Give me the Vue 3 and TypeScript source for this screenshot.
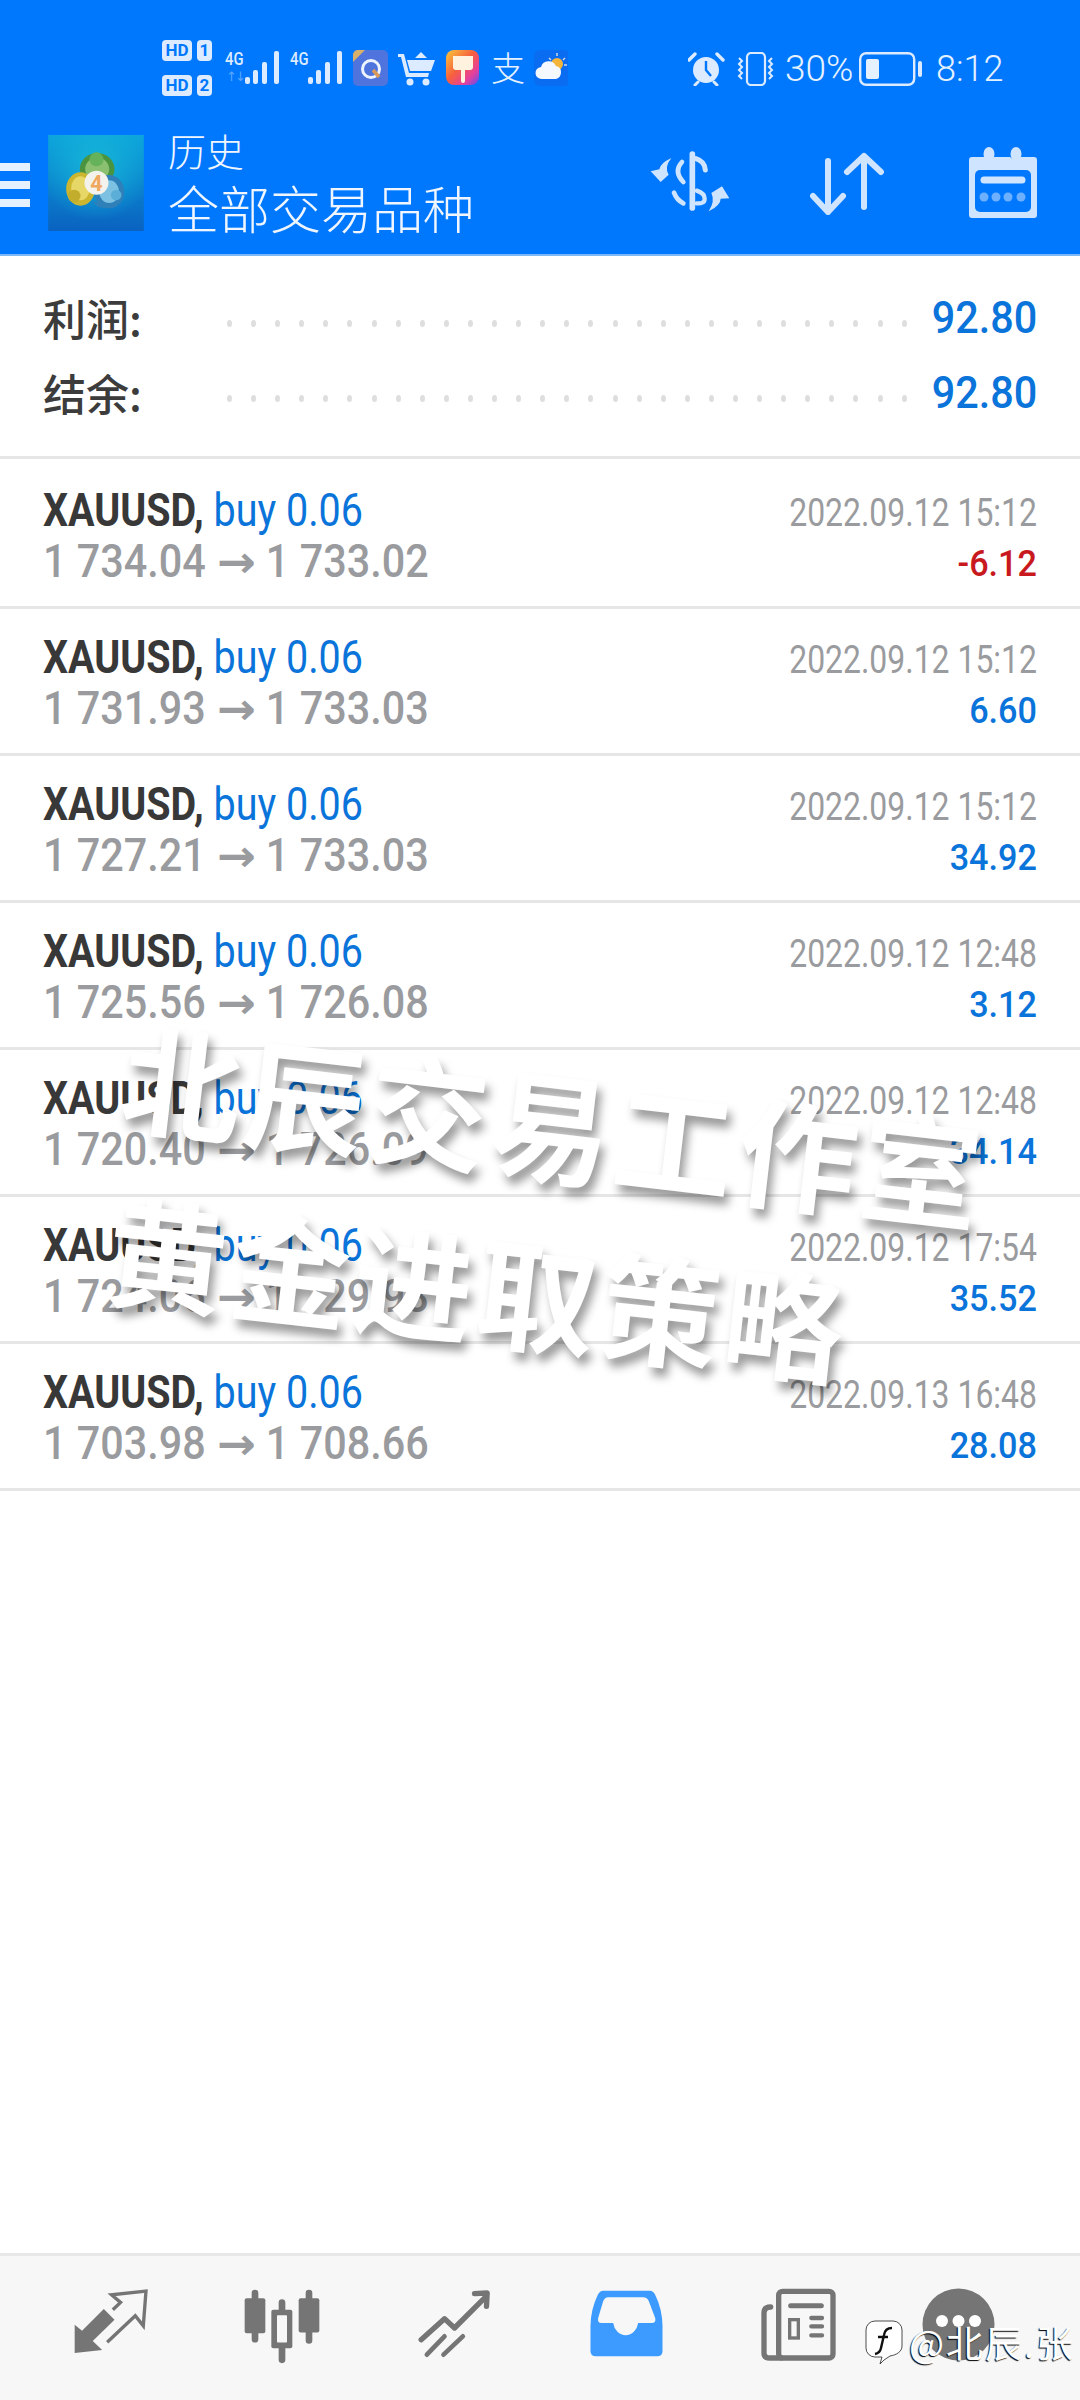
<script setup lang="ts">
type Trade = { open: string; close: string; time: string; profit: string; loss?: boolean };

const summary = [
  { label: "利润:", value: "92.80" },
  { label: "结余:", value: "92.80" },
];

const trades: Trade[] = [
  { open: "1 734.04", close: "1 733.02", time: "2022.09.12 15:12", profit: "-6.12", loss: true },
  { open: "1 731.93", close: "1 733.03", time: "2022.09.12 15:12", profit: "6.60" },
  { open: "1 727.21", close: "1 733.03", time: "2022.09.12 15:12", profit: "34.92" },
  { open: "1 725.56", close: "1 726.08", time: "2022.09.12 12:48", profit: "3.12" },
  { open: "1 720.40", close: "1 726.09", time: "2022.09.12 12:48", profit: "34.14" },
  { open: "1 724.06", close: "1 729.98", time: "2022.09.12 17:54", profit: "35.52" },
  { open: "1 703.98", close: "1 708.66", time: "2022.09.13 16:48", profit: "28.08" },
];

const dots = 29;
</script>

<template>
  <div class="page">
    <header class="top">
      <div class="status">
        <div class="hd">
          <div class="hd-line"><b>HD</b><b class="num">1</b></div>
          <div class="hd-line"><b>HD</b><b class="num">2</b></div>
        </div>
        <div class="signal s1">
          <span class="g">4G</span>
          <span class="updown">↑↓</span>
          <svg width="35" height="33" viewBox="0 0 35 33">
            <g fill="#dcebff">
              <rect x="0" y="26" width="5" height="7" rx="2" />
              <rect x="8" y="19" width="5" height="14" rx="2" />
              <rect x="17" y="11" width="5" height="22" rx="2" />
              <rect x="29" y="0" width="5" height="33" rx="2" />
            </g>
          </svg>
        </div>
        <div class="signal s2">
          <span class="g">4G</span>
          <svg width="35" height="33" viewBox="0 0 35 33">
            <g fill="#dcebff">
              <rect x="0" y="26" width="5" height="7" rx="2" />
              <rect x="8" y="19" width="5" height="14" rx="2" />
              <rect x="17" y="11" width="5" height="22" rx="2" />
              <rect x="29" y="0" width="5" height="33" rx="2" />
            </g>
          </svg>
        </div>
        <svg class="ic" width="35" height="36" viewBox="0 0 35 36">
          <rect width="35" height="36" rx="5" fill="#4f74dd" />
          <path d="M0 12V5a5 5 0 0 1 5-5h7z" fill="#d8b06a" />
          <circle cx="18" cy="19" r="8.500" fill="none" stroke="#eef4ff" stroke-width="3" />
          <path d="M20 20l6 7" stroke="#d89a5a" stroke-width="3.500" />
        </svg>
        <svg class="ic" width="37" height="36" viewBox="0 0 37 36">
          <g fill="#dcebff">
            <path d="M0 4h6l5 19h20l-1 4H8L3 7H0z" />
            <path d="M9 10h28l-4 11H12z" />
            <path d="M17 8l6-6 6 6z" />
            <circle cx="12" cy="32" r="3.500" />
            <circle cx="28" cy="32" r="3.500" />
          </g>
        </svg>
        <svg class="ic" width="36" height="36" viewBox="0 0 36 36">
          <defs>
            <linearGradient id="paint" x1="0" y1="0" x2="1" y2="1">
              <stop offset="0" stop-color="#f9c93a" />
              <stop offset=".45" stop-color="#f7603e" />
              <stop offset=".75" stop-color="#e5409c" />
              <stop offset="1" stop-color="#5a50f2" />
            </linearGradient>
          </defs>
          <rect x="1" width="33" height="35" rx="8" fill="url(#paint)" />
          <path d="M8 6h20v11q0 3-3 3h-5v11q0 2-2 2t-2-2V20h-5q-3 0-3-3z" fill="#fff3df" />
        </svg>
        <span class="ali">支</span>
        <svg class="ic" width="34" height="36" viewBox="0 0 34 36">
          <rect width="36" height="36" rx="6" fill="#0a6cf0" />
          <circle cx="23" cy="14" r="6" fill="#f4b63a" />
          <path d="M23 3v3M31 8l-2 2M15 8l2 2M33 15h-3" stroke="#cfd8e0" stroke-width="1.500" />
          <path d="M8 29a6 6 0 0 1-1-12 8 8 0 0 1 15-1 6 6 0 0 1 5 6 7 7 0 0 1-5 7z" fill="#f4f8ff" />
        </svg>

        <div class="status-right">
          <svg class="r-alarm" width="38" height="34" viewBox="0 0 38 34">
            <circle cx="18" cy="18" r="13" fill="#dcebff" />
            <path d="M18 9v9l5 6" stroke="#0078fe" stroke-width="2.400" fill="none" />
            <path d="M1 8l6-6M35 8l-6-6" stroke="#dcebff" stroke-width="3.400" stroke-linecap="round" />
            <path d="M7 33l3-3M29 33l-3-3" stroke="#dcebff" stroke-width="3" stroke-linecap="round" />
          </svg>
          <svg class="r-vib" width="39" height="34" viewBox="0 0 39 34">
            <rect x="11" y="1" width="18" height="32" rx="4" fill="none" stroke="#dcebff" stroke-width="2.200" />
            <path d="M3 6l3 3-3 3 3 3-3 3 3 3-3 3 3 3M36 6l-3 3 3 3-3 3 3 3-3 3 3 3-3 3" fill="none" stroke="#dcebff" stroke-width="2" />
          </svg>
          <span class="pct">30%</span>
          <svg class="r-bat" width="64" height="34" viewBox="0 0 64 34">
            <rect x="1.200" y="1.200" width="54" height="31.600" rx="6" fill="none" stroke="#dcebff" stroke-width="2.400" />
            <rect x="7" y="7" width="13" height="20" rx="2" fill="#e6f1ff" />
            <rect x="59" y="9" width="4" height="16" rx="2" fill="#dcebff" />
          </svg>
          <span class="clock">8:12</span>
        </div>
      </div>

      <div class="appbar">
        <div class="burger"><i></i><i></i><i></i></div>
        <svg class="logo" width="96" height="96" viewBox="25 30 287 288">
          <defs>
            <linearGradient id="tile" x1="0" y1="0" x2="0" y2="1">
              <stop offset="0" stop-color="#0ba4dc" />
              <stop offset="1" stop-color="#0a62c0" />
            </linearGradient>
            <radialGradient id="glow" cx=".5" cy=".3" r=".6">
              <stop offset="0" stop-color="#16b5d8" />
              <stop offset="1" stop-color="#16b5d8" stop-opacity="0" />
            </radialGradient>
          </defs>
          <rect x="25" y="30" width="287" height="288" fill="url(#tile)" />
          <rect x="25" y="30" width="287" height="288" fill="url(#glow)" />
          <ellipse cx="172" cy="132" rx="52" ry="48" fill="#4a9440" />
          <ellipse cx="172" cy="132" rx="36" ry="34" fill="#8ac070" />
          <ellipse cx="122" cy="192" rx="43" ry="50" fill="#cdb62f" />
          <ellipse cx="122" cy="190" rx="28" ry="36" fill="#e6d766" />
          <ellipse cx="208" cy="200" rx="45" ry="50" fill="#2f80b8" />
          <ellipse cx="208" cy="200" rx="30" ry="34" fill="#7cc0e2" />
          <path d="M158 228q30 14 52 6l-8 14q-30 4-44-20z" fill="#2f80b8" />
          <circle cx="170" cy="103" r="21" fill="#66b25a" />
          <circle cx="103" cy="213" r="19" fill="#c3ad2c" />
          <circle cx="229" cy="210" r="16" fill="#5aaed8" />
          <circle cx="170" cy="173" r="36" fill="#f4f2ec" />
          <text x="170" y="197" class="logo-four" text-anchor="middle">4</text>
        </svg>
        <div class="titles">
          <div class="t-small">历史</div>
          <div class="t-big">全部交易品种</div>
        </div>
        <div class="tools">
          <svg class="tool-dollar" width="110" height="85" viewBox="0 0 330 255">
            <g fill="none" stroke="#cfe4ff" stroke-linecap="round">
              <path d="M157 42v162" stroke-width="17" />
              <path d="M168 56q26 8 28 34" stroke-width="15" />
              <path d="M126 66q-26 28 4 60" stroke-width="14" />
              <path d="M170 152q24 8 24 24t-24 14" stroke-width="13" />
              <path d="M102 158q8 22 28 32" stroke-width="14" />
            </g>
            <path d="M94 54q-34 16-36 34l-26 6 30 32 24-22q-14-22 8-50zM206 214q36-18 36-38l26-1-22-36-32 20q12 24-8 55z" fill="#cfe4ff" />
          </svg>
          <svg class="tool-sort" width="74" height="63" viewBox="0 0 74 63">
            <g fill="none" stroke="#cfe4ff" stroke-width="6" stroke-linecap="round" stroke-linejoin="round">
              <path d="M18 9v51M3 44l15 16 15-16" />
              <path d="M54 4v51M37 20L54 4l17 16" />
            </g>
          </svg>
          <svg class="tool-cal" width="68" height="71" viewBox="0 0 68 71">
            <path d="M3 10h12a7 7 0 0 0 10 0h16a7 7 0 0 0 11 0h13a3 3 0 0 1 3 3v55a3 3 0 0 1-3 3H3a3 3 0 0 1-3-3V13a3 3 0 0 1 3-3z" fill="#cfe4ff" />
            <rect x="6" y="23" width="56" height="42" rx="5" fill="#0078fe" />
            <ellipse cx="20" cy="7" rx="5.500" ry="7" fill="#cfe4ff" />
            <ellipse cx="47" cy="7" rx="5.500" ry="7" fill="#cfe4ff" />
            <path d="M15 33h38" stroke="#cfe4ff" stroke-width="7" stroke-linecap="round" />
            <g fill="#6cb0ff">
              <circle cx="15" cy="50" r="4.500" />
              <circle cx="27" cy="50" r="4.500" />
              <circle cx="39" cy="50" r="4.500" />
              <circle cx="52" cy="50" r="4.500" />
            </g>
          </svg>
        </div>
      </div>
    </header>

    <section class="summary">
      <div v-for="item in summary" :key="item.label" class="sum-row">
        <span class="sum-label">{{ item.label }}</span>
        <span class="sum-dots"><i v-for="n in dots" :key="n"></i></span>
        <span class="sum-value">{{ item.value }}</span>
      </div>
    </section>

    <main class="list">
      <div v-for="(t, i) in trades" :key="i" class="trade">
        <div class="left">
          <div class="line"><b class="sym">XAUUSD,</b> <span class="buy">buy 0.06</span></div>
          <div class="line price">{{ t.open }} <span class="arrow">→</span> {{ t.close }}</div>
        </div>
        <div class="right">
          <div class="time">{{ t.time }}</div>
          <div class="profit" :class="{ loss: t.loss }">{{ t.profit }}</div>
        </div>
      </div>
    </main>

    <nav class="nav">
      <div class="nav-item">
        <svg width="77" height="67" viewBox="95 70 230 200">
          <path d="M103 180l22 18 65-65 32 32-65 63 28 27-82 9z" fill="#757575" />
          <path d="M217 135l23-22-27-23 103-11-8 104-24-30-84 79" fill="none" stroke="#757575" stroke-width="10" />
        </svg>
      </div>
      <div class="nav-item">
        <svg width="80" height="77" viewBox="605 55 240 230">
          <g stroke="#757575" stroke-width="20" stroke-linecap="round" fill="none">
            <path d="M644 70v138M725 98v172M806 70v142" />
          </g>
          <rect x="613" y="85" width="62" height="105" rx="6" fill="#757575" />
          <rect x="775" y="85" width="62" height="103" rx="6" fill="#757575" />
          <rect x="693" y="120" width="63" height="115" rx="6" fill="#757575" />
          <rect x="710" y="136" width="30" height="82" rx="2" fill="#f7f7f7" />
        </svg>
      </div>
      <div class="nav-item">
        <svg width="77" height="70" viewBox="1125 60 230 210">
          <g fill="none" stroke="#757575" stroke-linecap="round">
            <path d="M1140 215l70-63 30 28 95-95M1300 77l38-2-2 40" stroke-width="16" stroke-linejoin="round" />
            <path d="M1157 260l53-55M1207 260l58-55" stroke-width="14" />
          </g>
        </svg>
      </div>
      <div class="nav-item">
        <svg width="77" height="70" viewBox="55 60 230 210">
          <path d="M100 68h140q10 0 16 12 22 45 22 95v75q0 15-16 15H78q-16 0-16-15v-75q0-50 22-95 6-12 16-12z" fill="#3d9bff" />
          <path d="M115 88h105q12 0 17 12l19 50q4 15-11 15h-40a38 44 0 0 1-75 0H95q-13 0-10-15l15-50q5-12 15-12z" fill="#f7f7f7" />
        </svg>
      </div>
      <div class="nav-item">
        <svg width="80" height="75" viewBox="570 55 240 225">
          <g fill="none" stroke="#757575" stroke-linecap="round">
            <rect x="632" y="65" width="163" height="200" rx="12" stroke-width="16" />
            <path d="M608 112q-20 0-20 18v120q0 15 17 15h35" stroke-width="16" />
            <path d="M668 108h92" stroke-width="15" />
            <path d="M730 145h32M730 170h32M730 197h32" stroke-width="13" />
          </g>
          <rect x="665" y="150" width="26" height="55" fill="none" stroke="#757575" stroke-width="10" />
        </svg>
      </div>
      <div class="nav-item">
        <svg width="73" height="73" viewBox="0 0 73 73">
          <circle cx="36.500" cy="36.500" r="36" fill="#757575" />
          <circle cx="20" cy="33" r="6" fill="#fff" />
          <circle cx="36.500" cy="33" r="6" fill="#fff" />
          <circle cx="53" cy="33" r="6" fill="#fff" />
        </svg>
      </div>
    </nav>

    <div class="mark-line mark-a">北辰交易工作室</div>
    <div class="mark-line mark-b">黄金进取策略</div>

    <div class="credit">
      <svg width="38" height="46" viewBox="0 0 38 46">
        <path d="M10 2h18a9 9 0 0 1 9 9v16c0 6-6 9-12 10l-6 4-4 4 2-7h-7a9 9 0 0 1-9-9V11a9 9 0 0 1 9-9z" fill="#fff" stroke="#222" stroke-width=".8" />
        <path d="M27 9q-7 0-8 7l-3 13q-1 5-6 6M13 18h10" fill="none" stroke="#111" stroke-width="2.400" />
      </svg>
      <span>@北辰.张</span>
    </div>
  </div>
</template>

<style scoped>
.page {
  position: relative;
  width: 1080px;
  height: 2400px;
  overflow: hidden;
  display: flex;
  flex-direction: column;
  background: #fff;
  font-family: Roboto, "Noto Sans CJK SC", sans-serif;
}
.top {
  background: #0078fe;
  border-bottom: 2px solid #7db8f5;
  color: #f0f6ff;
}
.status {
  height: 122px;
  box-sizing: border-box;
  padding: 40px 76px 0 162px;
  display: flex;
  align-items: flex-start;
  gap: 10px;
}
.hd {
  width: 53px;
  flex: none;
  display: flex;
  flex-direction: column;
  gap: 14px;
}
.hd-line {
  display: flex;
  gap: 5px;
}
.hd-line b {
  height: 21px;
  width: 30px;
  border-radius: 4px;
  background: #dcebff;
  color: #0078fe;
  font: 700 17px/21px Roboto, sans-serif;
  text-align: center;
}
.hd-line b.num {
  width: 15px;
}
.signal {
  position: relative;
  flex: none;
  display: flex;
  justify-content: flex-end;
  height: 45px;
  padding-top: 11px;
}
.s1 {
  width: 55px;
}
.s2 {
  width: 53px;
}
.g {
  position: absolute;
  left: 0;
  top: 11px;
  font: 500 19px/16px Roboto, sans-serif;
  color: #dcebff;
  transform: scaleX(0.78);
  transform-origin: left;
}
.updown {
  position: absolute;
  left: 1px;
  top: 30px;
  font: 400 13px/14px "DejaVu Sans", sans-serif;
  letter-spacing: -2px;
  color: #5aa6ff;
}
.ic {
  flex: none;
  margin-top: 10px;
}
.ali {
  width: 33px;
  flex: none;
  margin-top: 8px;
  font: 300 34px/38px "Noto Sans CJK SC", sans-serif;
  color: #e6f1ff;
}
.status-right {
  margin-left: auto;
  margin-top: 12px;
  display: flex;
  align-items: center;
  color: #e6f1ff;
}
.r-alarm {
  margin-right: 10px;
}
.r-vib {
  margin-right: 10px;
}
.pct {
  width: 74px;
  font-size: 37px;
  font-weight: 300;
  line-height: 34px;
  white-space: nowrap;
}
.r-bat {
  margin-right: 13px;
}
.clock {
  width: 68px;
  font-size: 36px;
  font-weight: 300;
  line-height: 34px;
}
.appbar {
  height: 132px;
  box-sizing: border-box;
  padding-top: 13px;
  display: flex;
  align-items: flex-start;
}
.burger {
  width: 30px;
  margin-top: 28px;
  display: flex;
  flex-direction: column;
  gap: 10px;
}
.burger i {
  display: block;
  height: 8px;
  background: #e6f1ff;
}
.logo {
  margin-left: 18px;
  flex: none;
}
.logo-four {
  font: 700 64px Roboto, sans-serif;
  fill: #f0a860;
}
.titles {
  margin-left: 24px;
  margin-top: -10px;
}
.t-small {
  font: 300 38px/50px "Noto Sans CJK SC", sans-serif;
}
.t-big {
  font: 300 51px/64px "Noto Sans CJK SC", sans-serif;
  white-space: nowrap;
}
.tools {
  position: relative;
  display: flex;
  align-items: flex-start;
  margin-left: 166px;
  margin-top: 5px;
}
.tool-sort {
  margin-left: 60px;
  margin-top: 12px;
}
.tool-cal {
  margin-left: 85px;
  margin-top: 7px;
}
.summary {
  box-sizing: border-box;
  height: 203px;
  padding: 23px 43px 0;
  border-bottom: 3px solid #e6e6e6;
}
.sum-row {
  height: 75px;
  display: flex;
  align-items: center;
}
.sum-label {
  width: 184px;
  font: 500 43px/50px "Noto Sans CJK SC", sans-serif;
  color: #3c3c3c;
}
.sum-dots {
  width: 680px;
  display: flex;
  justify-content: space-between;
  margin-top: 14px;
}
.sum-dots i {
  width: 5px;
  height: 7px;
  border-radius: 50%;
  background: #dedede;
}
.sum-value {
  margin-left: auto;
  margin-top: 2px;
  font-size: 44px;
  font-weight: 500;
  color: #0a74da;
  transform: scaleX(0.94);
  transform-origin: right;
}
.list {
  flex: 1;
  padding-top: 3px;
}
.trade {
  box-sizing: border-box;
  height: 147px;
  padding: 22px 43px 0;
  border-bottom: 3px solid #e6e6e6;
  display: flex;
  justify-content: space-between;
}
.left {
  width: 600px;
  flex: none;
}
.line {
  font-size: 47px;
  line-height: 51px;
  white-space: nowrap;
  transform: scaleX(0.84);
  transform-origin: left;
  width: 800px;
}
.sym {
  font-weight: 700;
  color: #383838;
}
.buy {
  color: #0a74da;
}
.price {
  font-weight: 500;
  color: #9a9b9e;
  transform: scaleX(0.88);
}
.arrow {
  display: inline-block;
  margin: 0 4px;
  font-family: "DejaVu Sans", sans-serif;
  font-weight: 700;
  font-size: 44px;
  line-height: 40px;
  transform: scaleX(1.2);
}
.right {
  text-align: right;
  padding-top: 4px;
}
.time {
  font-size: 38px;
  line-height: 51px;
  color: #9a9b9e;
  white-space: nowrap;
  transform: scaleX(0.84);
  transform-origin: right;
}
.profit {
  font-size: 36px;
  font-weight: 500;
  line-height: 51px;
  color: #0a74da;
  transform: scaleX(0.95);
  transform-origin: right;
}
.loss {
  color: #c8191e;
}
.nav {
  box-sizing: border-box;
  height: 147px;
  border-top: 3px solid #e8e8e8;
  background: #f7f7f7;
  padding-left: 24px;
  display: flex;
  align-items: flex-start;
}
.nav-item {
  width: 172px;
  flex: none;
  padding-top: 32px;
  display: flex;
  justify-content: center;
}
.nav-item:last-child {
  margin-left: -12px;
}
.mark-line {
  position: absolute;
  font: 700 120px/130px "Noto Sans CJK SC", sans-serif;
  letter-spacing: 4px;
  color: #fff;
  white-space: nowrap;
  text-shadow: 5px 8px 10px rgba(0, 0, 0, 0.4);
}
.mark-a {
  left: 120px;
  top: 1057px;
  transform: rotate(6.7deg);
}
.mark-b {
  left: 106px;
  top: 1220px;
  transform: rotate(6.3deg);
}
.credit {
  position: absolute;
  left: 865px;
  top: 2319px;
  display: flex;
  align-items: center;
  gap: 6px;
  font: 400 37px/46px "Noto Sans CJK SC", sans-serif;
  letter-spacing: 2px;
  color: #fff;
  text-shadow: -1px 1px 1px #000;
  white-space: nowrap;
}
</style>
